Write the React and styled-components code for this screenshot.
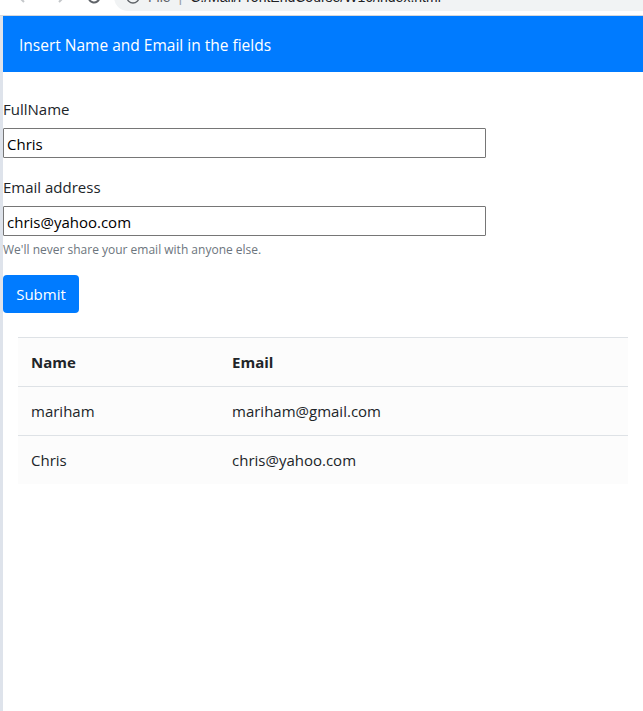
import React from 'react';
import styled, { createGlobalStyle } from 'styled-components';

const { useState } = React;

const GlobalStyle = createGlobalStyle`
  html, body {
    margin: 0;
    padding: 0;
    background: #ffffff;
  }
  body {
    font-family: "Open Sans", "Noto Sans", sans-serif;
    font-size: 15px;
    color: #212529;
  }
`;

const ChromeBar = styled.div`
  height: 15px;
  overflow: hidden;
  background: #ffffff;
  border-bottom: 1px solid #d6d8dc;
`;

const Toolbar = styled.div`
  display: flex;
  align-items: center;
  height: 28px;
  margin-top: -17px;
  padding-left: 16px;
`;

const NavButton = styled.div`
  width: 16px;
  height: 16px;
  margin-right: ${(p) => p.gap}px;
  color: ${(p) => (p.disabled ? '#c4c7ca' : '#5f6368')};
  display: flex;
`;

const Omnibox = styled.div`
  flex: 1;
  height: 28px;
  border-radius: 14px 0 0 14px;
  background: #f1f3f4;
  display: flex;
  align-items: center;
  padding-left: 12px;
  font-family: "Liberation Sans", Arial, sans-serif;
  font-size: 14px;
  white-space: nowrap;
`;

const Scheme = styled.span`
  color: #5f6368;
  margin-left: 8px;
`;

const Divider = styled.span`
  color: #9aa0a6;
  margin: 0 8px;
`;

const Url = styled.span`
  color: #202124;
`;

const Body = styled.div`
  display: flex;
  min-height: 695px;
`;

const Strip = styled.div`
  width: 3px;
  background: #dee3eb;
  flex-shrink: 0;
`;

const Main = styled.main`
  flex: 1;
  min-width: 0;
`;

const Header = styled.div`
  height: 56px;
  box-sizing: border-box;
  background: #007bff;
  color: #ffffff;
  display: flex;
  align-items: center;
  padding: 3px 16px 0;
`;

const HeaderTitle = styled.h1`
  margin: 0;
  font-family: "Open Sans", sans-serif;
  font-weight: 400;
  font-size: 15.5px;
  line-height: 1;
`;

const Form = styled.form`
  padding-top: 26px;
  width: 483px;
`;

const Group = styled.div`
  margin-bottom: ${(p) => p.space}px;
`;

const Label = styled.label`
  display: block;
  line-height: 22px;
  margin-bottom: 8px;
`;

const Input = styled.input`
  display: block;
  box-sizing: border-box;
  width: 100%;
  height: 30px;
  margin: 0;
  padding: 1px 3px 0;
  border: 1px solid #767676;
  border-radius: 1px;
  font-family: "Open Sans", sans-serif;
  font-size: 15px;
  color: #000000;
  background: #ffffff;
  outline: none;
`;

const Help = styled.small`
  display: block;
  margin-top: 4px;
  font-size: 12px;
  line-height: 19px;
  color: #6c757d;
`;

const SubmitButton = styled.button`
  display: block;
  width: 76px;
  height: 38px;
  padding: 0;
  border: none;
  border-radius: 4px;
  background: #007bff;
  color: #ffffff;
  font-family: "Open Sans", sans-serif;
  font-size: 15px;
  cursor: pointer;
`;

const TableWrap = styled.div`
  margin: 24px 15px 0;
`;

const Table = styled.table`
  width: 100%;
  table-layout: fixed;
  border-collapse: collapse;
  background: #fcfcfc;
`;

const Cell = styled.td`
  padding: 0 13px;
  height: 48px;
  border-top: 1px solid #dee2e6;
  text-align: left;
  width: ${(p) => p.w || 'auto'};
  font-weight: ${(p) => (p.head ? 700 : 400)};
`;

function BackIcon() {
  return (
    <svg width="16" height="16" viewBox="0 0 16 16" fill="none" stroke="currentColor" strokeWidth="2">
      <path d="M14 8H3M8 3L3 8l5 5" />
    </svg>
  );
}

function ForwardIcon() {
  return (
    <svg width="16" height="16" viewBox="0 0 16 16" fill="none" stroke="currentColor" strokeWidth="2">
      <path d="M2 8h11M8 3l5 5-5 5" />
    </svg>
  );
}

function ReloadIcon() {
  return (
    <svg width="16" height="16" viewBox="0 0 16 16" fill="none" stroke="currentColor" strokeWidth="2">
      <path d="M13.5 8A5.5 5.5 0 1 1 11.9 4.1" />
      <path d="M14 2v4h-4" />
    </svg>
  );
}

function InfoIcon() {
  return (
    <svg width="14" height="14" viewBox="0 0 14 14" fill="none" stroke="#5f6368" strokeWidth="1.4">
      <circle cx="7" cy="7" r="6" />
      <path d="M7 6v4M7 4v.5" />
    </svg>
  );
}

const people = [
  { name: 'mariham', email: 'mariham@gmail.com' },
  { name: 'Chris', email: 'chris@yahoo.com' },
];

export default function App() {
  const [name, setName] = useState('Chris');
  const [email, setEmail] = useState('chris@yahoo.com');
  const [rows, setRows] = useState(people);

  const submitForm = (event) => {
    event.preventDefault();
    setRows([...rows, { name, email }]);
  };

  return (
    <>
      <GlobalStyle />
      <ChromeBar>
        <Toolbar>
          <NavButton disabled gap={19}><BackIcon /></NavButton>
          <NavButton disabled gap={19}><ForwardIcon /></NavButton>
          <NavButton gap={12}><ReloadIcon /></NavButton>
          <Omnibox>
            <InfoIcon />
            <Scheme>File</Scheme>
            <Divider>|</Divider>
            <Url>C:/Mail/FrontEndCourse/W16/index.html</Url>
          </Omnibox>
        </Toolbar>
      </ChromeBar>
      <Body>
        <Strip />
        <Main>
          <Header>
            <HeaderTitle>Insert Name and Email in the fields</HeaderTitle>
          </Header>
          <Form onSubmit={submitForm}>
            <Group space={18}>
              <Label htmlFor="fullname">FullName</Label>
              <Input id="fullname" value={name} onChange={(e) => setName(e.target.value)} />
            </Group>
            <Group space={16}>
              <Label htmlFor="email">Email address</Label>
              <Input id="email" type="email" value={email} onChange={(e) => setEmail(e.target.value)} />
              <Help>We'll never share your email with anyone else.</Help>
            </Group>
            <SubmitButton type="submit">Submit</SubmitButton>
          </Form>
          <TableWrap>
            <Table>
              <thead>
                <tr>
                  <Cell as="th" head w="175px">Name</Cell>
                  <Cell as="th" head>Email</Cell>
                </tr>
              </thead>
              <tbody>
                {rows.map((row, i) => (
                  <tr key={i}>
                    <Cell>{row.name}</Cell>
                    <Cell>{row.email}</Cell>
                  </tr>
                ))}
              </tbody>
            </Table>
          </TableWrap>
        </Main>
      </Body>
    </>
  );
}
